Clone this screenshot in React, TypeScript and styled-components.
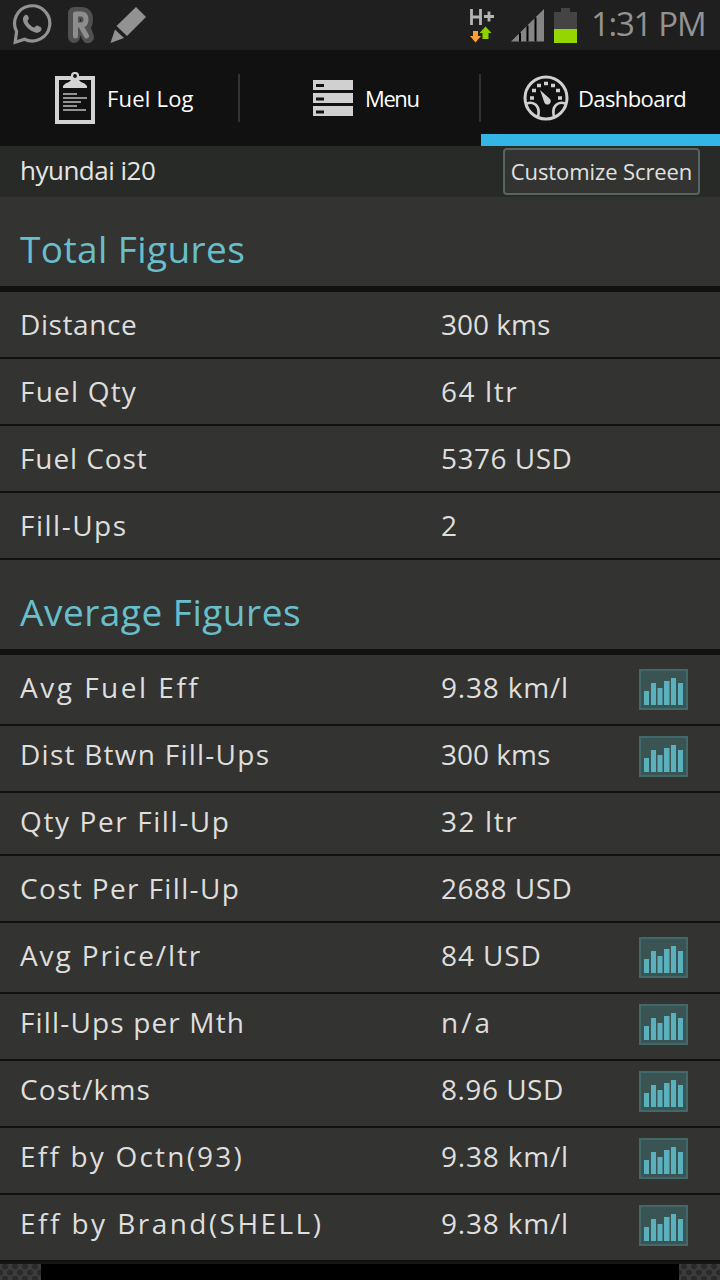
import React from "react";
import styled, { createGlobalStyle } from "styled-components";

const Global = createGlobalStyle`
  * { box-sizing: border-box; }
  body { margin: 0; background: #000; }
`;

const Screen = styled.main`
  width: 720px;
  height: 1280px;
  overflow: hidden;
  display: flex;
  flex-direction: column;
  background: #000;
  color: #dededc;
  font-family: "Open Sans", "Noto Sans", sans-serif;
  svg { display: block; flex: none; }
`;

const StatusBar = styled.header`
  height: 50px;
  flex: none;
  display: flex;
  align-items: center;
  justify-content: space-between;
  padding: 0 12px;
  background: #1f1f1f;
  color: #929292;
`;

const StatusGroup = styled.div<{ $gap: number }>`
  display: flex;
  align-items: center;
  gap: ${(p) => p.$gap}px;
`;

const Label = styled.span<{ $track?: number }>`
  letter-spacing: ${(p) => p.$track ?? 0}px;
  white-space: nowrap;
`;

const Clock = styled.time`
  width: 117px;
  margin-left: 4px;
  font-size: 33px;
  letter-spacing: -1.3px;
  line-height: 48px;
  padding-bottom: 2px;
  white-space: nowrap;
`;

const Tabs = styled.nav`
  height: 96px;
  flex: none;
  display: grid;
  grid-template-columns: 238px 2px 239px 2px 239px;
  align-items: center;
  background: #111;
`;

const Divider = styled.span`
  height: 48px;
  background: #333;
`;

const Tab = styled.div<{ $active?: boolean; $left: number; $gap: number }>`
  height: 96px;
  display: flex;
  align-items: center;
  gap: ${(p) => p.$gap}px;
  padding-left: ${(p) => p.$left}px;
  box-shadow: ${(p) => (p.$active ? "inset 0 -12px #33b5e5" : "none")};
  color: #fff;
  font-size: 22px;
`;

const VehicleBar = styled.div`
  height: 51px;
  flex: none;
  display: flex;
  align-items: center;
  justify-content: space-between;
  padding: 0 20px 0 20px;
  background: #282a28;
  color: #e4e6e4;
  font-size: 26px;
  line-height: 49px;
`;

const Button = styled.button`
  width: 197px;
  height: 47px;
  padding: 0 0 2px;
  border: 2px solid #566462;
  border-radius: 4px;
  background: #333331;
  color: #e0e2e0;
  font: 22px/40px "Open Sans", sans-serif;
`;

const VehicleName = styled(Label)`
  padding-bottom: 2px;
`;

const SectionTitle = styled.h2`
  height: 95px;
  flex: none;
  margin: 0;
  padding: 8px 0 0 20px;
  border-bottom: 6px solid #111;
  background: #333331;
  color: #68bfcb;
  font-size: 37px;
  font-weight: 400;
  line-height: 88px;
`;

const Row = styled.div<{ $height: number; $top: number }>`
  height: ${(p) => p.$height}px;
  flex: none;
  display: grid;
  grid-template-columns: 421px 198px 49px;
  align-items: start;
  padding: ${(p) => p.$top}px 0 0 20px;
  border-bottom: 2px solid #111;
  background: #333331;
  font-size: 28px;
  line-height: 37px;
`;

const BottomBar = styled.footer`
  flex: 1;
  display: flex;
  justify-content: space-between;
  background: #000;
  border-top: 2px solid #161616;
`;

const WhatsApp = () => (
  <svg width="40" height="42" viewBox="0 0 40 42" fill="none">
    <path d="M4.6 27.5A17.6 17.6 0 1 1 12.5 35.2L3.2 38.2Z" stroke="#929292" strokeWidth="3.2" />
    <path d="M13 11.2c1.500-1 3 .2 3.800 2.900.5 1.500-1.800 2.200-1.200 3.400 1.300 2.900 3.500 4.800 6.200 5.900 1.300.5 2.100-2.500 3.500-1.900 3.400 1.400 4.600 2.200 4.200 3.700-.5 2.700-3.400 4-6.300 3.200-6.200-1.800-11.200-7-12.200-12.100-.3-2.200.6-4.300 2-5.100Z" fill="#929292" />
  </svg>
);

const LetterR = () => (
  <svg width="28" height="38" viewBox="0 0 28 38" fill="none" strokeLinejoin="round" strokeLinecap="round">
    <path d="M7 31V7h7q6 0 6 6t-3 7l4 11-5-9H8" stroke="#505050" strokeWidth="12" />
    <path d="M8.500 30V8h5.500q5 0 5 5.500t-5 5.500H9M14 20l5.500 10" stroke="#8d8d8d" strokeWidth="5" />
  </svg>
);

const Pencil = () => (
  <svg width="37" height="38" viewBox="0 0 37 38" fill="#929292">
    <path d="M26 1L36 11L17 30L6.500 20Z" />
    <path d="M5 23.500L14 32L.5 37Z" />
  </svg>
);

const DataIcon = () => (
  <svg width="27" height="36" viewBox="0 0 27 36" fill="none">
    <path d="M2.500 2v16M11.500 2v16M2.500 10h9M15 9.500h10M20 4.500v10" stroke="#b4b4b4" strokeWidth="2.800" />
    <path d="M4 24h5v5h3l-5.500 6.500L1 29h3z" fill="#ffa033" />
    <path d="M13.500 32v-6h-3l6-6.500 6 6.500h-3v6z" fill="#8ed100" />
  </svg>
);

const Signal = () => (
  <svg width="33" height="34" viewBox="0 0 33 34">
    <path d="M0 33.500L33 1V33.500Z" fill="#858585" />
    <path d="M9 24.700v8.800M16.500 17.400v16.100M24.500 9.500v24" stroke="#000" strokeWidth="2" />
  </svg>
);

const Battery = () => (
  <svg width="23" height="35" viewBox="0 0 23 35">
    <path d="M7 0h9v4h7v31H0V4h7z" fill="#444" />
    <path d="M0 21h23v14H0z" fill="#96d600" />
  </svg>
);

const Clipboard = () => (
  <svg width="40" height="52" viewBox="0 0 40 52" fill="none">
    <path d="M2 6h36v44H2z" stroke="#d3d3d3" strokeWidth="4" />
    <path d="M8 16v-2q2-3 6-4l3-3h6l3 3q4 1 6 4v2z" fill="#d3d3d3" />
    <circle cx="20" cy="4" r="3" stroke="#d3d3d3" strokeWidth="2.200" fill="#111" />
    <path d="M8 22h14M8 26h24M8 30h18M8 34h14M8 38h23" stroke="#929292" strokeWidth="2" />
  </svg>
);

const MenuIcon = () => (
  <svg width="40" height="36" viewBox="0 0 40 36">
    <path d="M0 0h40v10H0zM0 13h40v10H0zM0 26h40v10H0z" fill="#d0d0d0" />
    <path d="M3 4h8v3H3zM3 17.500h8v3H3zM3 30.500h8v3H3z" fill="#111" />
  </svg>
);

const Gauge = () => (
  <svg width="46" height="46" viewBox="0 0 46 46" fill="none" stroke="#d0d0d0">
    <circle cx="23" cy="23" r="21" strokeWidth="3" />
    <path d="M3 29q6-3 10 1t2 12M43 29q-6-3-10 1t-2 12" strokeWidth="2.600" />
    <path d="M7 23h4M35 23h4M9 15.500h4M33 15.500h4M14 10.500h4M28 10.500h4M21 8.500h4" strokeWidth="3.600" />
    <path d="M17 15l9.500 8.500a3.400 3.400 0 1 1-5.500 3Z" fill="#d0d0d0" stroke="none" />
  </svg>
);

const ChartIcon = () => (
  <svg width="49" height="41" viewBox="0 0 49 41">
    <path d="M1 1h47v39H1z" fill="#3a5353" stroke="#426869" strokeWidth="2" />
    <path d="M5 22h5v14H5zM12 14h5v22h-5zM18.500 19h5v17h-5zM25 12h5.500v24H25zM32 9h5v27h-5zM39 14h5v22h-5z" fill="#5bb0bd" />
  </svg>
);

const Texture = () => (
  <svg width="41" height="18">
    <defs>
      <pattern id="mesh" width="10" height="12" patternUnits="userSpaceOnUse">
        <rect width="10" height="12" fill="#3c3c3c" />
        <circle cx="5" cy="2.500" r="3" fill="#2a2a2a" />
        <circle cx="0" cy="8.500" r="3" fill="#2a2a2a" />
        <circle cx="10" cy="8.500" r="3" fill="#2a2a2a" />
      </pattern>
    </defs>
    <rect width="41" height="18" fill="url(#mesh)" />
  </svg>
);

type Figure = {
  name: string;
  nameTrack: number;
  value: string;
  valueTrack: number;
  height: number;
  chart?: boolean;
  tight?: boolean;
};

const totals: Figure[] = [
  { name: "Distance", nameTrack: 0.6, value: "300 kms", valueTrack: 0, height: 67 },
  { name: "Fuel Qty", nameTrack: 1.2, value: "64 ltr", valueTrack: 1.6, height: 67 },
  { name: "Fuel Cost", nameTrack: 0.9, value: "5376 USD", valueTrack: 0.5, height: 67 },
  { name: "Fill-Ups", nameTrack: 1.5, value: "2", valueTrack: 0, height: 67 },
];

const averages: Figure[] = [
  { name: "Avg Fuel Eff", nameTrack: 2.5, value: "9.38 km/l", valueTrack: 0.8, chart: true, height: 71 },
  { name: "Dist Btwn Fill-Ups", nameTrack: 1.25, value: "300 kms", valueTrack: 0, chart: true, height: 67, tight: true },
  { name: "Qty Per Fill-Up", nameTrack: 1.6, value: "32 ltr", valueTrack: 1.6, height: 63, tight: true },
  { name: "Cost Per Fill-Up", nameTrack: 1.35, value: "2688 USD", valueTrack: 0.5, height: 67 },
  { name: "Avg Price/ltr", nameTrack: 1.9, value: "84 USD", valueTrack: 0.9, chart: true, height: 71 },
  { name: "Fill-Ups per Mth", nameTrack: 1.15, value: "n/a", valueTrack: 3, chart: true, height: 67, tight: true },
  { name: "Cost/kms", nameTrack: 1.1, value: "8.96 USD", valueTrack: 0.5, chart: true, height: 67, tight: true },
  { name: "Eff by Octn(93)", nameTrack: 2.2, value: "9.38 km/l", valueTrack: 0.8, chart: true, height: 67, tight: true },
  { name: "Eff by Brand(SHELL)", nameTrack: 2.45, value: "9.38 km/l", valueTrack: 0.8, chart: true, height: 67, tight: true },
];

const FigureRow = ({ figure }: { figure: Figure }) => (
  <Row $height={figure.height} $top={figure.tight ? 10 : 14}>
    <Label $track={figure.nameTrack}>{figure.name}</Label>
    <Label $track={figure.valueTrack}>{figure.value}</Label>
    {figure.chart && <ChartIcon />}
  </Row>
);

export default function App() {
  return (
    <Screen>
      <Global />
      <StatusBar>
        <StatusGroup $gap={15}>
          <WhatsApp />
          <LetterR />
          <Pencil />
        </StatusGroup>
        <StatusGroup $gap={10}>
          <StatusGroup $gap={15}>
            <DataIcon />
            <Signal />
          </StatusGroup>
          <Battery />
          <Clock>1:31 PM</Clock>
        </StatusGroup>
      </StatusBar>
      <Tabs>
        <Tab $left={55} $gap={12}><Clipboard /><Label $track={0.2}>Fuel Log</Label></Tab>
        <Divider />
        <Tab $left={73} $gap={12}><MenuIcon /><Label $track={-1.4}>Menu</Label></Tab>
        <Divider />
        <Tab $active $left={42} $gap={9}><Gauge /><Label $track={-0.6}>Dashboard</Label></Tab>
      </Tabs>
      <VehicleBar>
        <VehicleName $track={-0.5}>hyundai i20</VehicleName>
        <Button><Label $track={-0.1}>Customize Screen</Label></Button>
      </VehicleBar>
      <SectionTitle><Label $track={0.4}>Total Figures</Label></SectionTitle>
      {totals.map((f) => <FigureRow key={f.name} figure={f} />)}
      <SectionTitle><Label $track={0.5}>Average Figures</Label></SectionTitle>
      {averages.map((f) => <FigureRow key={f.name} figure={f} />)}
      <BottomBar><Texture /><Texture /></BottomBar>
    </Screen>
  );
}
